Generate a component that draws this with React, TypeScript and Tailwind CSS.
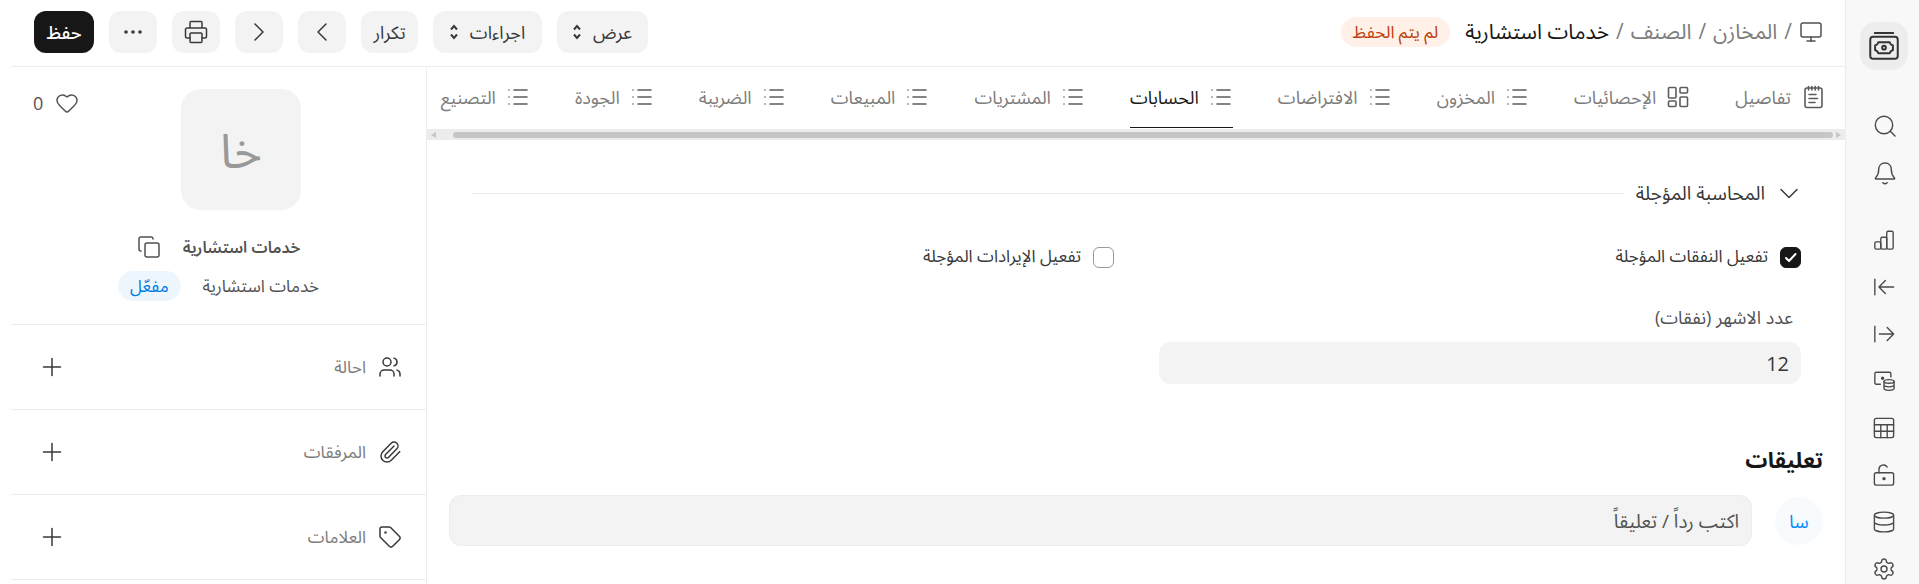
// File: App.tsx
// Purpose: Item form page (RTL), with module rail, header toolbar, tabs and side panel

import { useState } from "react";
import type { ReactNode } from "react";
import { Copy, Heart, Monitor, Paperclip, Settings, Tag, Users } from "lucide-react";

const TABS = [
  { label: "تفاصيل", icon: "notes" },
  { label: "الإحصائيات", icon: "grid" },
  { label: "المخزون", icon: "list" },
  { label: "الافتراضات", icon: "list" },
  { label: "الحسابات", icon: "list" },
  { label: "المشتريات", icon: "list" },
  { label: "المبيعات", icon: "list" },
  { label: "الضريبة", icon: "list" },
  { label: "الجودة", icon: "list" },
  { label: "التصنيع", icon: "list" },
];

export default function App() {
  return (
    <div
      dir="rtl"
      lang="ar"
      className="flex min-h-screen overflow-hidden bg-white font-['Open_Sans','Noto_Sans_Arabic','DejaVu_Sans',sans-serif] text-[#383838]"
    >
      <ModuleRail />
      <div className="ml-[11px] flex min-w-0 flex-1 flex-col">
        <Header />
        <div className="flex flex-1">
          <main className="min-w-0 flex-1">
            <Tabs />
            <AccountsForm />
            <Comments />
          </main>
          <SidePanel />
        </div>
      </div>
    </div>
  );
}

function Icon({ children, size = 22, width = 1.5 }: { children: ReactNode; size?: number; width?: number }) {
  return (
    <svg
      width={size}
      height={size}
      viewBox="0 0 24 24"
      fill="none"
      stroke="currentColor"
      strokeWidth={width}
      strokeLinecap="round"
      strokeLinejoin="round"
      className="shrink-0"
      aria-hidden="true"
    >
      {children}
    </svg>
  );
}

function RailButton({ label, children }: { label: string; children: ReactNode }) {
  return (
    <button type="button" aria-label={label} className="flex h-[47px] w-12 items-center justify-center text-[#4a4a4a]">
      {children}
    </button>
  );
}

function ModuleRail() {
  return (
    <nav className="flex w-[74px] shrink-0 flex-col items-center border-l border-[#ededed] bg-[#f8f8f8] pl-[3px] pt-[22px]">
      <button
        type="button"
        aria-label="المحاسبة"
        className="mb-8 flex h-12 w-12 shrink-0 items-center justify-center rounded-2xl bg-[#ededed] text-[#333]"
      >
        <Icon size={34} width={1.4}>
          <path d="M5.500 2.800h13" />
          <rect x="2.300" y="5.500" width="19.400" height="15.500" rx="2" />
          <path d="M8 9.300h8c.3 1.200 1.100 2 2.300 2.300v3.200c-1.200.3-2 1.100-2.300 2.300H8c-.3-1.200-1.100-2-2.300-2.300v-3.200c1.200-.3 2-1.100 2.300-2.300z" />
          <circle cx="12" cy="13.200" r="1.300" />
        </Icon>
      </button>
      <div className="flex flex-col pl-[2px]">
        <RailButton label="بحث">
          <Icon size={24} width={1.4}>
            <circle cx="11" cy="11" r="8.700" />
            <path d="M17.300 17.300l4.700 4.700" />
          </Icon>
        </RailButton>
        <RailButton label="الإشعارات">
          <Icon size={24} width={1.4}>
            <path d="M12 2c-4 0-6.300 3-6.300 6.500 0 5.500-1.300 6.300-3.200 8.500-.4.500-.2 1 .5 1h18c.7 0 .9-.5.5-1-1.900-2.200-3.200-3-3.200-8.500C18.300 5 16 2 12 2z" />
            <path d="M9.800 21.700c1.300 1.200 3.100 1.200 4.400 0" />
          </Icon>
        </RailButton>
      </div>
      <div className="mt-5 flex flex-col">
        <RailButton label="التقارير">
          <Icon>
            <rect x="2" y="14" width="6.500" height="8" rx="1.500" />
            <rect x="8.500" y="9" width="6.500" height="13" rx="1.500" />
            <rect x="15" y="2.500" width="7" height="19.500" rx="1.500" />
          </Icon>
        </RailButton>
        <RailButton label="الذمم الدائنة">
          <Icon>
            <path d="M2 3.500v17M22.500 12H7M13.500 5l-7 7 7 7" />
          </Icon>
        </RailButton>
        <RailButton label="الذمم المدينة">
          <Icon>
            <path d="M2 3.500v17M7 12h15.500M15.500 5l7 7-7 7" />
          </Icon>
        </RailButton>
        <RailButton label="المدفوعات">
          <Icon>
            <path d="M8 15.500H3.500A1.500 1.500 0 0 1 2 14V4a1.500 1.500 0 0 1 1.500-1.500H18A1.500 1.500 0 0 1 19.500 4v3.500" />
            <circle cx="10.500" cy="9" r="1.100" fill="currentColor" />
            <ellipse cx="17.500" cy="12.500" rx="5.500" ry="2" />
            <path d="M12 12.500v7.500c0 1.200 2.500 2.200 5.500 2.200s5.500-1 5.500-2.200v-7.500M12 16.200c0 1.200 2.500 2.200 5.500 2.200s5.500-1 5.500-2.200" />
          </Icon>
        </RailButton>
        <RailButton label="التقارير المالية">
          <Icon>
            <rect x="1.500" y="1.500" width="21" height="21" rx="2" />
            <path d="M1.500 8.500h21M1.500 15.500h21M8.500 8.500v14M15.500 8.500v14" />
          </Icon>
        </RailButton>
        <RailButton label="إقفال الفترة">
          <Icon>
            <rect x="1.500" y="9.500" width="21" height="13.500" rx="2" />
            <path d="M6.500 9.500V6a4.900 4.900 0 0 1 9-2.700" />
            <circle cx="12" cy="16" r="1.100" fill="currentColor" />
          </Icon>
        </RailButton>
        <RailButton label="البيانات">
          <Icon>
            <ellipse cx="12" cy="4.500" rx="10.500" ry="3.300" />
            <path d="M1.500 4.500v15c0 1.800 4.700 3.300 10.500 3.300s10.500-1.500 10.500-3.300v-15M1.500 12c0 1.800 4.700 3.300 10.500 3.300s10.500-1.500 10.500-3.300" />
          </Icon>
        </RailButton>
        <RailButton label="الإعدادات">
          <Settings size={24} strokeWidth={1.4} />
        </RailButton>
      </div>
    </nav>
  );
}

function SelectorArrows() {
  return (
    <svg width="8" height="16" viewBox="0 0 8 16" fill="none" stroke="currentColor" strokeWidth="2" aria-hidden="true">
      <path d="M1 5.500l3-3.500 3 3.500M1 10.500l3 3.500 3-3.500" />
    </svg>
  );
}

function Header() {
  const button = "flex h-[42px] items-center justify-center rounded-xl bg-[#f3f3f3] text-lg";

  return (
    <header className="flex h-[67px] items-center justify-between border-b border-[#ededed] pb-[2px] pl-[23px] pr-[22px]">
      <div className="flex items-center">
        <nav className="flex items-center gap-[7px] text-[21px] text-[#7c7c7c]">
          <a href="#home" aria-label="الرئيسية" className="text-[#525252]">
            <Monitor size={24} strokeWidth={1.5} />
          </a>
          <span>/</span>
          <a href="#stock">المخازن</a>
          <span>/</span>
          <a href="#item">الصنف</a>
          <span>/</span>
          <span className="text-[#171717]">خدمات استشارية</span>
        </nav>
        <span className="mr-[15px] flex h-[30px] items-center rounded-full bg-[#fff1e7] px-3 text-[17px] text-[#bd3e0c]">
          لم يتم الحفظ
        </span>
      </div>

      {/* Toolbar */}
      <div className="flex items-center gap-[15px]">
        <button type="button" className={`${button} w-[91px] gap-3`}>
          عرض
          <SelectorArrows />
        </button>
        <button type="button" className={`${button} w-[109px] gap-3`}>
          اجراءات
          <SelectorArrows />
        </button>
        <button type="button" className={`${button} w-[57px]`}>
          تكرار
        </button>
        <button type="button" aria-label="السابق" className={`${button} w-12`}>
          <Icon size={24}>
            <path d="M16 4l-8 8 8 8" />
          </Icon>
        </button>
        <button type="button" aria-label="التالي" className={`${button} w-12`}>
          <Icon size={24}>
            <path d="M8 4l8 8-8 8" />
          </Icon>
        </button>
        <button type="button" aria-label="طباعة" className={`${button} w-12`}>
          <Icon size={24}>
            <path d="M6 8V2.500a1 1 0 0 1 1-1h10a1 1 0 0 1 1 1V8M6 18H3a1.500 1.500 0 0 1-1.500-1.500v-7A1.500 1.500 0 0 1 3 8h18a1.500 1.500 0 0 1 1.500 1.500v7A1.500 1.500 0 0 1 21 18h-3" />
            <rect x="6" y="13" width="12" height="9.500" rx="1" />
          </Icon>
        </button>
        <button type="button" aria-label="المزيد" className={`${button} w-12`}>
          <Icon size={24} width={0}>
            <g fill="currentColor">
              <circle cx="5" cy="12" r="1.800" />
              <circle cx="12" cy="12" r="1.800" />
              <circle cx="19" cy="12" r="1.800" />
            </g>
          </Icon>
        </button>
        <button
          type="button"
          className="flex h-[42px] w-[60px] items-center justify-center rounded-xl bg-[#171717] text-lg font-medium text-white"
        >
          حفظ
        </button>
      </div>
    </header>
  );
}

function TabIcon({ name }: { name: string }) {
  if (name === "notes") {
    return (
      <Icon size={24} width={1.6}>
        <rect x="4" y="3" width="17" height="19.500" rx="2" />
        <path d="M7.500 1.500v3.500M10.800 1.500v3.500M14.200 1.500v3.500M17.500 1.500v3.500M8 9.500h7M8 13.500h8.500M8 17.500h6" />
      </Icon>
    );
  }
  if (name === "grid") {
    return (
      <Icon size={24} width={1.6}>
        <rect x="2.500" y="2.500" width="7.500" height="10.500" rx="1" />
        <rect x="14" y="2.500" width="7.500" height="5.500" rx="1" />
        <rect x="2.500" y="16" width="7.500" height="5.500" rx="1" />
        <rect x="14" y="12" width="7.500" height="9.500" rx="1" />
      </Icon>
    );
  }
  return (
    <Icon size={24} width={1.6}>
      <path d="M8 5h13M8 12h13M8 19h13" />
      <path d="M3 5h.01M3 12h.01M3 19h.01" />
    </Icon>
  );
}

function Tabs() {
  const [active, setActive] = useState(4);

  return (
    <div>
      <div role="tablist" className="flex h-[62px] gap-[45px] overflow-hidden pb-px pr-5">
        {TABS.map((tab, i) => (
          <button
            key={tab.label}
            type="button"
            role="tab"
            aria-selected={i === active}
            onClick={() => setActive(i)}
            className={`flex shrink-0 items-center gap-[10px] whitespace-nowrap border-b text-lg ${
              i === active ? "border-[#171717] text-[#171717]" : "border-transparent text-[#7c7c7c]"
            }`}
          >
            <span className="text-[#5c5c5c]">
              <TabIcon name={tab.icon} />
            </span>
            {tab.label}
          </button>
        ))}
      </div>
      {/* Horizontal scroll track */}
      <div className="flex h-[11px] items-center bg-[#ececec] px-1 text-[#c6c6c6]" aria-hidden="true">
        <svg width="5" height="6" viewBox="0 0 5 6" fill="currentColor">
          <path d="M0 0l5 3-5 3z" />
        </svg>
        <div className="mr-[3px] ml-[17px] h-[6px] flex-1 rounded-full bg-[#c6c6c6]" />
        <svg width="5" height="6" viewBox="0 0 5 6" fill="currentColor">
          <path d="M5 0L0 3l5 3z" />
        </svg>
      </div>
    </div>
  );
}

function CheckField({ label, defaultChecked }: { label: string; defaultChecked?: boolean }) {
  return (
    <label className="flex h-[21px] items-center gap-3 text-[17px]">
      <span className="relative flex h-[21px] w-[21px] shrink-0">
        <input
          type="checkbox"
          defaultChecked={defaultChecked}
          className="peer h-[21px] w-[21px] appearance-none rounded-[6px] border border-[#999] checked:border-[#171717] checked:bg-[#171717]"
        />
        <svg
          viewBox="0 0 21 21"
          fill="none"
          stroke="white"
          strokeWidth="2"
          strokeLinecap="round"
          strokeLinejoin="round"
          className="pointer-events-none absolute inset-0 hidden peer-checked:block"
          aria-hidden="true"
        >
          <path d="M6 11l3 3 6.500-7" />
        </svg>
      </span>
      <span className="pb-1">{label}</span>
    </label>
  );
}

function AccountsForm() {
  return (
    <section className="pl-[45px] pr-11 pt-10">
      <div className="flex h-[26px] items-center">
        <button type="button" className="flex items-center gap-3 text-[19px]">
          <Icon size={24}>
            <path d="M4 8.500l8 8 8-8" />
          </Icon>
          المحاسبة المؤجلة
        </button>
        <div className="mr-3 h-px flex-1 bg-[#ededed]" />
      </div>

      <div className="mt-[41px] grid grid-cols-2 gap-x-[45px]">
        <CheckField label="تفعيل النفقات المؤجلة" defaultChecked />
        <CheckField label="تفعيل الإيرادات المؤجلة" />
        <div className="mt-[34px]">
          <label htmlFor="months" className="mb-[10px] block px-2 text-lg leading-[30px] text-[#525252]">
            عدد الاشهر (نفقات)
          </label>
          <input
            id="months"
            type="text"
            defaultValue="12"
            className="block h-[42px] w-full rounded-xl bg-[#f3f3f3] px-3 text-xl text-[#383838] outline-none"
          />
        </div>
      </div>
    </section>
  );
}

function Comments() {
  return (
    <section className="px-[22px] pt-[59px]">
      <h2 className="text-[22px] font-bold leading-8 text-[#171717]">تعليقات</h2>
      <div className="mt-5 flex items-center gap-[23px]">
        <div className="flex h-12 w-12 shrink-0 items-center justify-center rounded-full bg-[#f7fbfe] text-lg text-[#0289f7]">
          سا
        </div>
        <input
          type="text"
          aria-label="تعليق"
          placeholder="اكتب رداً / تعليقاً"
          className="h-[51px] min-w-0 flex-1 rounded-xl border border-[#ededed] bg-[#f3f3f3] px-3 text-[19px] outline-none placeholder:text-[#525252]"
        />
      </div>
    </section>
  );
}

function PanelRow({ icon, label }: { icon: ReactNode; label: string }) {
  return (
    <div className="flex h-[85px] items-center border-b border-[#ededed] pl-[29px] pr-6">
      <span className="text-[#383838]">{icon}</span>
      <span className="mr-3 flex-1 text-[17px] text-[#7c7c7c]">{label}</span>
      <button type="button" aria-label={`إضافة ${label}`}>
        <Icon size={24}>
          <path d="M12 3.500v17M3.500 12h17" />
        </Icon>
      </button>
    </div>
  );
}

function SidePanel() {
  return (
    <aside className="w-[416px] shrink-0 border-r border-[#ededed]">
      <div className="relative flex h-[258px] flex-col items-center border-b border-[#ededed] pt-[22px]">
        <div className="ml-[45px] flex h-[121px] w-[120px] items-center justify-center rounded-[20px] bg-[#f3f3f3] text-[48px] text-[#999]">
          خا
        </div>
        <button type="button" className="absolute left-[22px] top-[22px] flex items-center gap-3 text-lg text-[#525252]">
          <Heart size={24} strokeWidth={1.5} />
          0
        </button>
        <div className="mt-[21px] flex h-8 items-center gap-[22px] text-base text-[#525252]">
          <span className="font-semibold">خدمات استشارية</span>
          <button type="button" aria-label="نسخ">
            <Copy size={24} strokeWidth={1.5} />
          </button>
        </div>
        <div className="mt-2 flex h-[30px] items-center gap-[22px] text-[17px] text-[#525252]">
          <span>خدمات استشارية</span>
          <span className="flex h-[30px] items-center rounded-full bg-[#edf6fd] px-3 text-[#007be0]">مفعّل</span>
        </div>
      </div>
      <PanelRow icon={<Users size={24} strokeWidth={1.5} />} label="احالة" />
      <PanelRow icon={<Paperclip size={24} strokeWidth={1.5} />} label="المرفقات" />
      <PanelRow icon={<Tag size={24} strokeWidth={1.5} />} label="العلامات" />
    </aside>
  );
}
